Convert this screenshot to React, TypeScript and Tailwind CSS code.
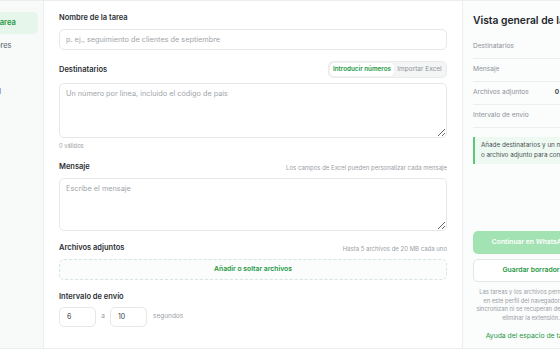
import React from "react";

function Label({ children }: { children: React.ReactNode }) {
  return <div className="text-[7.5px] font-semibold text-[#2b2f33] leading-[12px]">{children}</div>;
}

export default function App() {
  return (
    <div className="w-[560px] h-[350px] overflow-hidden bg-white font-['Inter',sans-serif]">
      <div className="flex w-[600px] h-[349px] border-t border-b border-[#eceeed]">
        {/* sidebar */}
        <div className="w-[44px] shrink-0 bg-[#f8faf9] border-r border-[#eceeed] overflow-hidden flex flex-col items-end pr-[5px] pt-[11px]">
          {["Nueva tarea", "Borradores", "Tareas", "Historial"].map((t, i) => (
            <div
              key={t}
              className={
                "w-[74px] shrink-0 h-[22px] mb-[1px] rounded-[5px] px-[8px] flex items-center text-[7.5px] whitespace-nowrap " +
                (i === 0 ? "bg-[#e6f6ea] text-[#23973f] font-semibold" : "text-[#5b6168]")
              }
            >
              {t}
            </div>
          ))}
        </div>

        {/* main */}
        <div className="w-[419px] shrink-0 border-r border-[#eceeed] px-[15px] pt-[11px]">
          <Label>Nombre de la tarea</Label>
          <input
            className="mt-[4px] w-full h-[21px] rounded-[5px] border border-[#e6e8e8] px-[6px] text-[7.3px] outline-none placeholder:text-[#a0a5aa]"
            placeholder="p. ej., seguimiento de clientes de septiembre"
          />

          <div className="mt-[11px] h-[17px] flex items-center justify-between">
            <Label>Destinatarios</Label>
            <div className="h-[17px] w-[119px] rounded-[5px] bg-[#f4f5f5] border border-[#eaecec] flex items-center p-[1px]">
              <div className="h-full w-[64px] rounded-[4px] bg-white shadow-[0_0_1px_rgba(0,0,0,0.15)] flex items-center justify-center text-[6.3px] font-semibold text-[#23973f] whitespace-nowrap">
                Introducir números
              </div>
              <div className="flex-1 flex items-center justify-center text-[6.5px] text-[#8c9298] whitespace-nowrap">
                Importar Excel
              </div>
            </div>
          </div>
          <textarea
            className="mt-[5px] block w-full h-[55px] rounded-[5px] border border-[#e6e8e8] px-[6px] py-[5px] text-[7.3px] outline-none resize-y placeholder:text-[#a0a5aa]"
            placeholder="Un número por línea, incluido el código de país"
          />
          <div className="mt-[4px] text-[5.8px] leading-[8px] text-[#9aa0a6]">0 válidos</div>

          <div className="mt-[11px] flex items-center justify-between">
            <Label>Mensaje</Label>
            <div className="text-[6px] text-[#9aa0a6]">Los campos de Excel pueden personalizar cada mensaje</div>
          </div>
          <textarea
            className="mt-[5px] block w-full h-[53px] rounded-[5px] border border-[#e6e8e8] px-[6px] py-[5px] text-[7.3px] outline-none resize-y placeholder:text-[#a0a5aa]"
            placeholder="Escribe el mensaje"
          />

          <div className="mt-[11px] flex items-center justify-between">
            <Label>Archivos adjuntos</Label>
            <div className="text-[6px] text-[#9aa0a6]">Hasta 5 archivos de 20 MB cada uno</div>
          </div>
          <div className="mt-[5px] h-[21px] rounded-[5px] border border-dashed border-[#d6e6dc] bg-[#fafdfb] flex items-center justify-center text-[6.8px] font-semibold text-[#23973f]">
            Añadir o soltar archivos
          </div>

          <div className="mt-[11px]">
            <Label>Intervalo de envío</Label>
          </div>
          <div className="mt-[4px] flex items-center">
            <div className="w-[37px] h-[20px] rounded-[5px] border border-[#e6e8e8] px-[7px] flex items-center text-[7px] text-[#3b4045]">6</div>
            <div className="w-[14px] text-center text-[6.5px] text-[#9aa0a6]">a</div>
            <div className="w-[37px] h-[20px] rounded-[5px] border border-[#e6e8e8] px-[7px] flex items-center text-[7px] text-[#3b4045]">10</div>
            <div className="ml-[6px] text-[6.5px] text-[#9aa0a6]">segundos</div>
          </div>
        </div>

        {/* right panel */}
        <div className="w-[136px] shrink-0 bg-[#fbfcfc] px-[10px] pt-[12px]">
          <div className="text-[10.3px] leading-[14px] font-semibold text-[#23272b] whitespace-nowrap">Vista general de la tarea</div>
          <div className="mt-[9px]">
            {[
              ["Destinatarios", ""],
              ["Mensaje", ""],
              ["Archivos adjuntos", "0"],
              ["Intervalo de envío", ""],
            ].map(([k, v]) => (
              <div key={k} className="h-[23px] border-b border-[#eceeed] flex items-center justify-between text-[6.6px]">
                <span className="text-[#8c9298]">{k}</span>
                <span className="font-semibold text-[#2b2f33] pr-[30px]">{v}</span>
              </div>
            ))}
          </div>
          <div className="mt-[9px] h-[27px] border-l-2 border-[#5cc778] bg-[#eef9f1] pl-[6px] pt-[3px] text-[6.3px] leading-[10px] text-[#4a5056] whitespace-nowrap">
            <div>Añade destinatarios y un mensaje</div>
            <div>o archivo adjunto para continuar.</div>
          </div>

          <div className="mt-[67px] h-[23px] rounded-[5px] bg-[#a3e2b2] flex items-center justify-center text-[6.8px] font-semibold text-white whitespace-nowrap">
            Continuar en WhatsApp
          </div>
          <div className="mt-[5px] h-[23px] rounded-[5px] border border-[#e3e6e5] bg-white flex items-center justify-center text-[6.8px] font-semibold text-[#23973f]">
            Guardar borrador
          </div>
          <div className="mt-[6px] text-center text-[5.8px] leading-[8.7px] text-[#9aa0a6] whitespace-nowrap">
            <div>Las tareas y los archivos permanecen</div>
            <div>en este perfil del navegador. No se</div>
            <div>sincronizan ni se recuperan después de</div>
            <div>eliminar la extensión.</div>
          </div>
          <div className="mt-[8px] text-center text-[6.8px] text-[#23973f] whitespace-nowrap">Ayuda del espacio de tareas</div>
        </div>
      </div>
    </div>
  );
}
